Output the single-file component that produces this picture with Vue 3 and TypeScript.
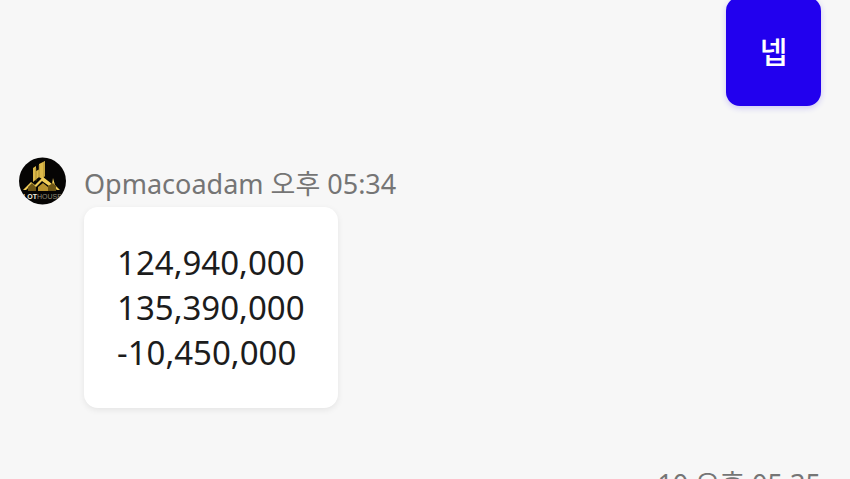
<template>
  <div class="chat">
    <div class="sent">
      <div class="bubble mine">넵</div>
    </div>

    <div class="received">
      <svg class="avatar" viewBox="0 0 47 48" aria-hidden="true">
        <defs>
          <clipPath id="logo-clip"><circle cx="23.5" cy="24" r="23.5" /></clipPath>
        </defs>
        <circle cx="23.5" cy="24" r="23.5" fill="#060504" />
        <g clip-path="url(#logo-clip)">
          <path d="M14 25V11l3-2v5l3-1.500V7l6-3v15l-3 3-3-2-6 5z" fill="#dcb94a" />
          <path d="M17 11v13M20 8v13M25 5v15" stroke="#8a6f1e" stroke-width=".6" fill="none" />
          <path d="M4 33l8-8 4 3 8-8 9 7 1-6 2 7 5 5h-3l-5-5-3 1-7-5-7 7-4-3-5 5z" fill="#f0cd58" />
          <path d="M9 34v-4l4-4 4 4v4zM29 34v-5l5-3 3 3v5z" fill="#6d5515" />
          <path d="M19 30l5-4 5 4v4H19z" fill="#b8922e" />
          <text x="23.500" y="42" class="logo-text">LOT<tspan class="logo-dim">HOUSE</tspan></text>
        </g>
      </svg>
      <div class="body">
        <div class="meta">Opmacoadam 오후 05:34</div>
        <div class="bubble theirs">
          <div>124,940,000</div>
          <div>135,390,000</div>
          <div>-10,450,000</div>
        </div>
      </div>
    </div>

    <div class="sent-meta">10 오후 05:35</div>
  </div>
</template>

<script setup lang="ts">
</script>

<style>
html,
body {
  margin: 0;
  height: 100%;
  overflow: hidden;
  background: #f7f7f7;
}
</style>

<style scoped>
.chat {
  height: 479px;
  overflow: hidden;
  padding: 0 29px 0 19px;
  display: flex;
  flex-direction: column;
  font-family: "Noto Sans", "Noto Sans CJK KR", sans-serif;
  background: #f7f7f7;
}

.sent {
  display: flex;
  justify-content: flex-end;
  margin-top: -3px;
}

.bubble {
  font-size: 33px;
  line-height: 45px;
  border-radius: 14px;
}

.mine {
  width: 95px;
  padding: 32px 0;
  text-align: center;
  font-size: 30px;
  font-weight: 500;
  color: #fff;
  background: #2200ee;
  box-shadow: 0 2px 6px rgba(34, 0, 238, 0.2);
}

.received {
  display: flex;
  gap: 18px;
  margin-top: 51px;
}

.avatar {
  width: 47px;
  height: 48px;
  flex: none;
}

.logo-text {
  font-family: "Liberation Sans", sans-serif;
  font-size: 7px;
  font-weight: 700;
  fill: #f4f0e0;
  text-anchor: middle;
}

.logo-dim {
  fill: #8f8a78;
  font-weight: 400;
}

.body {
  display: flex;
  flex-direction: column;
  align-items: flex-start;
}

.meta {
  margin-top: 5px;
  height: 45px;
  font-size: 27px;
  line-height: 43px;
  color: #757575;
}

.theirs {
  padding: 33px 33px 33px 33px;
  color: #1c1c1c;
  background: #fff;
  box-shadow: 0 2px 6px rgba(0, 0, 0, 0.08);
}

.sent-meta {
  margin-top: 54px;
  text-align: right;
  font-size: 27px;
  line-height: 43px;
  color: #757575;
}
</style>
